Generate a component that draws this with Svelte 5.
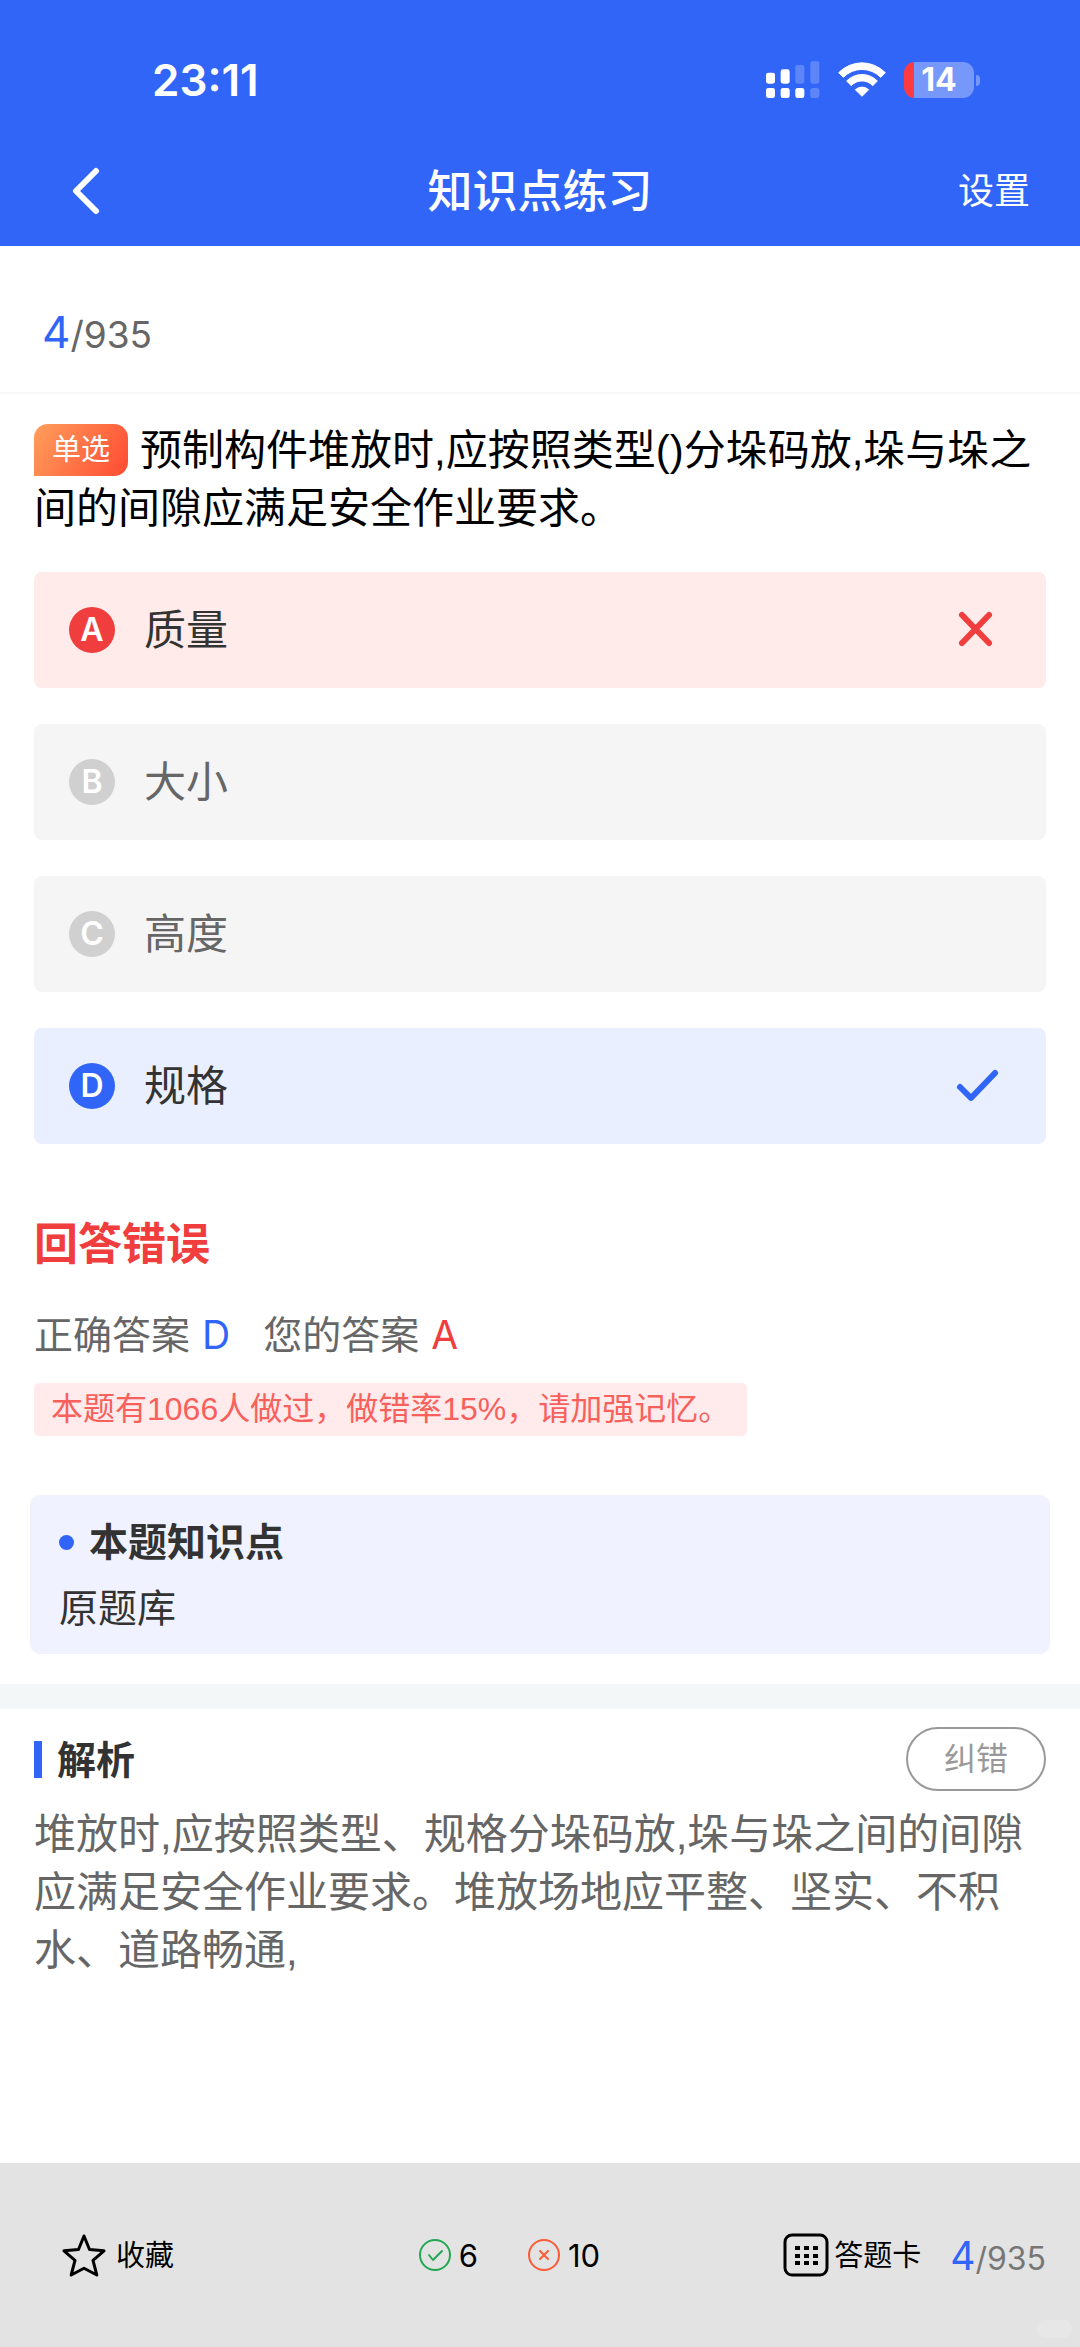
<script>
  const current = 4;
  const total = 935;
  const options = [
    { key: 'A', text: '质量', state: 'wrong' },
    { key: 'B', text: '大小', state: 'idle' },
    { key: 'C', text: '高度', state: 'idle' },
    { key: 'D', text: '规格', state: 'right' }
  ];
</script>

<div class="app">
  <header>
    <div class="status">
      <span class="time">23:11</span>
      <div class="indicators">
        <svg width="54" height="38" viewBox="0 0 162 114" fill="#fff" aria-hidden="true">
          <rect x="0" y="35" width="27" height="33" rx="7" />
          <rect x="44" y="25" width="27" height="43" rx="7" />
          <rect x="88" y="12" width="27" height="56" rx="7" opacity=".22" />
          <rect x="133" y="1" width="27" height="67" rx="7" opacity=".22" />
          <rect x="0" y="81" width="27" height="30" rx="7" />
          <rect x="44" y="81" width="27" height="30" rx="7" />
          <rect x="88" y="81" width="27" height="30" rx="7" />
          <rect x="133" y="81" width="27" height="30" rx="7" opacity=".22" />
        </svg>
        <svg width="48" height="36" viewBox="0 0 144 108" fill="#fff" stroke="#fff" stroke-width="3" stroke-linejoin="round" aria-hidden="true">
          <path d="M2 32A98 98 0 0 1 142 32L128 46A78 78 0 0 0 16 46Z" />
          <path d="M26 57A64 64 0 0 1 118 57L104 71A43 43 0 0 0 40 71Z" />
          <path d="M52 83A30 30 0 0 1 92 83L72 103Z" />
        </svg>
        <div class="battery"><span class="level">14</span><i class="nub"></i></div>
      </div>
    </div>
    <nav>
      <button class="back" aria-label="返回">
        <svg width="32" height="48" viewBox="0 0 32 48" fill="none" stroke="#fff" stroke-width="6" stroke-linecap="round" stroke-linejoin="round" aria-hidden="true">
          <path d="M26 4L6 24L26 44" />
        </svg>
      </button>
      <h1>知识点练习</h1>
      <button class="settings">设置</button>
    </nav>
  </header>

  <div class="progress"><b>{current}</b>/{total}</div>

  <main>
    <span class="tag">单选</span>
    <p class="question">预制构件堆放时,应按照类型()分垛码放,垛与垛之间的间隙应满足安全作业要求。</p>

    <div class="options">
      {#each options as option}
        <button class="option {option.state}">
          <span class="key">{option.key}</span>
          <span class="label">{option.text}</span>
          {#if option.state === 'wrong'}
            <svg width="48" height="48" viewBox="0 0 48 48" fill="none" stroke="#f03e3e" stroke-width="6" stroke-linecap="round" aria-hidden="true">
              <path d="M10 9L37 37M37 9L10 37" />
            </svg>
          {:else if option.state === 'right'}
            <svg width="48" height="48" viewBox="0 0 48 48" fill="none" stroke="#3165f8" stroke-width="6" stroke-linecap="round" stroke-linejoin="round" aria-hidden="true">
              <path d="M8 25L19 36L43 11" />
            </svg>
          {/if}
        </button>
      {/each}
    </div>

    <h2 class="verdict">回答错误</h2>
    <p class="answers">
      <span>正确答案<b class="blue">D</b></span>
      <span>您的答案<b class="red">A</b></span>
    </p>
    <p class="stat">本题有1066人做过，做错率15%，请加强记忆。</p>
  </main>

  <section class="point">
    <h3><i class="dot"></i>本题知识点</h3>
    <p>原题库</p>
  </section>

  <section class="analysis">
    <div class="heading">
      <h3>解析</h3>
      <button class="report">纠错</button>
    </div>
    <p>堆放时,应按照类型、规格分垛码放,垛与垛之间的间隙应满足安全作业要求。堆放场地应平整、坚实、不积水、道路畅通,</p>
  </section>

  <footer>
    <button class="item favorite">
      <svg width="44" height="44" viewBox="0 0 44 44" fill="none" stroke="#000" stroke-width="3" stroke-linejoin="round" aria-hidden="true">
        <path d="M22 3L27.5 16.5L42 17.8L31 27.3L34.8 42L22 35.2L9.2 42L13 27.3L2 17.8L16.5 16.5Z" />
      </svg>
      收藏
    </button>
    <div class="scores">
      <span class="score">
        <svg width="32" height="32" viewBox="0 0 32 32" fill="none" stroke="#22a852" stroke-width="2" stroke-linecap="round" stroke-linejoin="round" aria-hidden="true">
          <circle cx="16" cy="16" r="15" />
          <path d="M10 16L14 21L23 12" />
        </svg>
        6
      </span>
      <span class="score">
        <svg width="32" height="32" viewBox="0 0 32 32" fill="none" stroke="#fa5a35" stroke-width="2" stroke-linecap="round" aria-hidden="true">
          <circle cx="16" cy="16" r="15" />
          <path d="M12 12L20 20M20 12L12 20" />
        </svg>
        10
      </span>
    </div>
    <div class="right">
      <button class="item card">
        <svg width="46" height="44" viewBox="0 0 46 44" aria-hidden="true">
          <rect x="2" y="2" width="42" height="40" rx="7" fill="none" stroke="#000" stroke-width="3" />
          {#each [13, 21, 28] as y}
            {#each [12, 21, 30] as x}
              <rect {x} {y} width="5" height="4" />
            {/each}
          {/each}
        </svg>
        答题卡
      </button>
      <span class="count"><b>{current}</b>/{total}</span>
    </div>
    <i class="mark"></i>
  </footer>
</div>

<style>
  :global(body) {
    margin: 0;
    background: #fff;
  }
  .app {
    display: flex;
    flex-direction: column;
    min-height: 100vh;
    font-family: Inter, "Noto Sans CJK SC", sans-serif;
    line-height: 1;
    color: #333;
  }
  h1, h2, h3, p {
    margin: 0;
  }
  button {
    padding: 0;
    border: 0;
    background: none;
    font: inherit;
    color: inherit;
    cursor: pointer;
  }
  svg {
    display: block;
    flex: none;
  }

  header {
    background: #3165f8;
    color: #fff;
  }
  .status {
    display: flex;
    justify-content: space-between;
    align-items: center;
    height: 60px;
    padding: 50px 100px 26px 152px;
  }
  .time {
    font-size: 44px;
    font-weight: 600;
  }
  .indicators {
    display: flex;
    align-items: center;
    gap: 18px;
  }
  .battery {
    display: flex;
    align-items: center;
    gap: 2px;
  }
  .level {
    width: 70px;
    height: 36px;
    border-radius: 11px;
    background: linear-gradient(90deg, #ff3b3f 10px, #7698fb 10px);
    font-size: 32px;
    line-height: 36px;
    font-weight: 700;
    text-align: center;
  }
  .nub {
    width: 4px;
    height: 11px;
    border-radius: 0 4px 4px 0;
    background: #7698fb;
  }
  nav {
    display: grid;
    grid-template-columns: 1fr auto 1fr;
    align-items: center;
    height: 110px;
    padding: 0 50px 0 70px;
  }
  .back {
    justify-self: start;
  }
  h1 {
    margin-right: 20px;
    font-size: 45px;
    font-weight: 500;
  }
  .settings {
    justify-self: end;
    font-size: 36px;
  }

  .progress {
    height: 148px;
    box-sizing: border-box;
    padding: 0 42px;
    border-bottom: 2px solid #f7f7f7;
    font-size: 37px;
    line-height: 172px;
    color: #666;
  }
  .progress b, .count b {
    font-weight: 400;
    color: #3165f8;
  }
  .progress b {
    font-size: 44px;
  }

  main {
    padding: 28px 34px 0;
  }
  .question, .stat, .analysis p {
    font-family: "Liberation Sans", "Noto Sans CJK SC", sans-serif;
  }
  .question {
    font-size: 42px;
    line-height: 58px;
    color: #000;
  }
  .tag {
    float: left;
    width: 94px;
    height: 52px;
    margin: 2px 12px 0 0;
    border-radius: 14px 14px 14px 0;
    background: linear-gradient(120deg, #ff9f5c, #ff4a32);
    font-size: 29px;
    line-height: 52px;
    text-align: center;
    color: #fff;
  }
  .options {
    display: flex;
    flex-direction: column;
    gap: 36px;
    margin-top: 34px;
  }
  .option {
    display: flex;
    align-items: center;
    height: 116px;
    padding: 0 46px 0 35px;
    border-radius: 8px;
    background: #f5f5f5;
    font-size: 42px;
    color: #666;
    text-align: left;
  }
  .key {
    width: 46px;
    height: 46px;
    border-radius: 50%;
    background: #d0d0d0;
    font-size: 32px;
    line-height: 46px;
    font-weight: 600;
    text-align: center;
    color: #fff;
  }
  .label {
    flex: 1;
    margin-left: 29px;
  }
  .wrong {
    background: #feebea;
    color: #333;
  }
  .wrong .key {
    background: #f03e3e;
  }
  .right.option {
    background: #e9efff;
    color: #333;
  }
  .right .key {
    background: #3165f8;
  }

  .verdict {
    margin-top: 70px;
    font-size: 44px;
    line-height: 60px;
    font-weight: 700;
    color: #f03e3e;
  }
  .answers {
    display: flex;
    gap: 33px;
    margin-top: 32px;
    font-size: 39px;
    line-height: 58px;
    color: #666;
  }
  .answers b {
    margin-left: 12px;
    font-weight: 400;
  }
  .blue {
    color: #3165f8;
  }
  .red {
    color: #f03e3e;
  }
  .stat {
    width: fit-content;
    margin-top: 19px;
    padding: 0 17px;
    border-radius: 5px;
    background: #ffebeb;
    font-size: 32px;
    line-height: 53px;
    color: #f8605c;
  }

  .point {
    margin: 59px 30px 30px;
    padding: 18px 29px 17px;
    border-radius: 10px;
    background: #f0f3ff;
    font-size: 39px;
  }
  .point h3 {
    display: flex;
    align-items: center;
    gap: 15px;
    font-size: 39px;
    line-height: 58px;
    font-weight: 600;
  }
  .point p {
    margin-top: 8px;
    line-height: 58px;
  }
  .dot {
    width: 15px;
    height: 15px;
    border-radius: 50%;
    background: #3165f8;
  }

  .analysis {
    padding: 18px 34px 0;
    border-top: 25px solid #f4f7f8;
  }
  .heading {
    display: flex;
    justify-content: space-between;
    align-items: center;
  }
  .heading h3 {
    padding-left: 15px;
    border-left: 8px solid #3165f8;
    font-size: 39px;
    line-height: 37px;
    font-weight: 600;
  }
  .report {
    box-sizing: border-box;
    width: 140px;
    height: 64px;
    border: 2px solid #999;
    border-radius: 32px;
    font-size: 32px;
    color: #999;
  }
  .analysis p {
    margin-top: 15px;
    font-size: 42px;
    line-height: 58px;
    color: #666;
  }

  footer {
    position: relative;
    display: grid;
    grid-template-columns: 4fr auto 5fr;
    align-items: center;
    height: 184px;
    margin-top: auto;
    padding: 0 34px 0 62px;
    background: #e3e3e3;
    font-size: 29px;
    color: #000;
  }
  .item {
    display: flex;
    align-items: center;
  }
  .favorite {
    gap: 10px;
  }
  .card {
    gap: 5px;
  }
  .scores {
    display: flex;
    gap: 50px;
    font-size: 31px;
  }
  .score {
    display: flex;
    align-items: center;
    gap: 8px;
  }
  footer .right {
    display: flex;
    align-items: center;
    justify-content: flex-end;
    gap: 29px;
  }
  .count {
    font-size: 32px;
    color: #777;
  }
  .count b {
    font-size: 39px;
  }
  .mark {
    position: absolute;
    right: 8px;
    bottom: 9px;
    width: 36px;
    height: 18px;
    border-radius: 9px;
    background: #e7e7e7;
  }
</style>
